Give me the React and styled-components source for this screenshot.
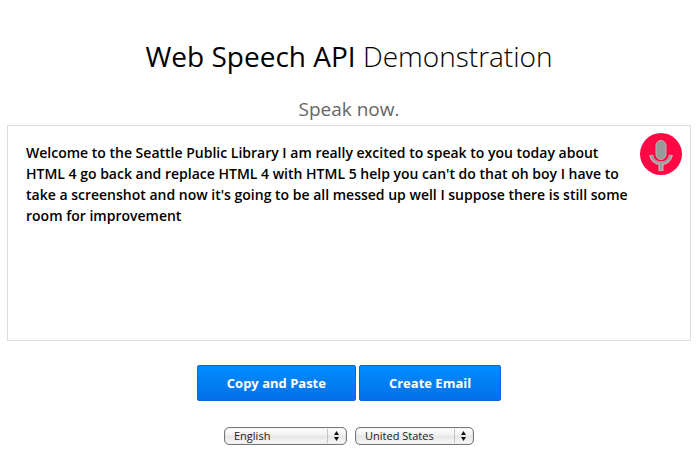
import React from "react";
import styled, { createGlobalStyle } from "styled-components";

const GlobalStyle = createGlobalStyle`
  * { box-sizing: border-box; }
  body {
    margin: 0;
    background: #fff;
    color: #000;
    font-family: "Open Sans", "Noto Sans", sans-serif;
  }
`;

const Page = styled.main`
  display: flex;
  flex-direction: column;
  padding: 36px 9px 8px 7px;
`;

const Title = styled.h1`
  margin: 0;
  font-size: 28px;
  line-height: 40px;
  font-weight: 400;
  text-align: center;
`;

const Light = styled.span`
  font-weight: 300;
`;

const Status = styled.p`
  margin: 18px 0 1px;
  font-size: 19px;
  line-height: 30px;
  color: #666;
  text-align: center;
`;

const Results = styled.section`
  display: flex;
  align-items: flex-start;
  justify-content: space-between;
  gap: 8px;
  min-height: 216px;
  padding: 7px 8px 16px 18px;
  border: 1px solid #ddd;
`;

const Transcript = styled.p`
  margin: 9px 0 0;
  max-width: 604px;
  font-size: 14px;
  line-height: 21px;
  font-weight: 600;
`;

const MicButton = styled.button`
  flex: none;
  width: 42px;
  height: 42px;
  padding: 0;
  border: 0;
  border-radius: 50%;
  background: none;
  cursor: pointer;

  svg { display: block; }
`;

const Actions = styled.div`
  display: flex;
  justify-content: center;
  gap: 3px;
  margin-top: 24px;
`;

const ActionButton = styled.button`
  height: 36px;
  padding: 0 29px;
  border: 1px solid #0a62dc;
  border-radius: 2px;
  background: linear-gradient(#008dfd, #0370ea);
  color: #fff;
  font-family: "Open Sans", sans-serif;
  font-size: 13px;
  font-weight: 700;
  cursor: pointer;
`;

const Languages = styled.div`
  display: flex;
  justify-content: center;
  gap: 8px;
  margin-top: 26px;
`;

const SelectFrame = styled.div`
  position: relative;
  display: flex;
  width: ${(p) => p.$width}px;

  svg {
    position: absolute;
    top: 0;
    right: 0;
    pointer-events: none;
  }
`;

const Select = styled.select`
  width: 100%;
  height: 18px;
  padding: 0 22px 0 9px;
  appearance: none;
  border: 1px solid #777;
  border-radius: 5px;
  background: linear-gradient(#fff, #f0f0f0 45%, #e5e5e5 50%, #f8f8f8);
  box-shadow: inset 0 0 1px #888;
  color: #222;
  font-family: "Open Sans", sans-serif;
  font-size: 11px;
  line-height: 16px;
`;

function MicIcon() {
  return (
    <svg width="42" height="42" viewBox="0 0 42 42" aria-hidden="true">
      <circle cx="21" cy="21" r="21" fill="#ff0844" />
      <g fill="none" stroke="#c5b3b6" strokeLinecap="butt">
        <path d="M11 22 C13 33 29 33 31 22" strokeWidth="4" />
        <path d="M21 30v8" strokeWidth="5" />
      </g>
      <path d="M11.5 22.5C14 32 28 32 30.5 22.5M21 30v7" fill="none" stroke="#999" strokeWidth="2" />
      <rect x="15" y="6" width="12" height="22" rx="6" fill="#ff0844" />
      <rect x="16" y="7.5" width="10" height="19" rx="5" fill="#999" stroke="#bbb0b2" strokeWidth="1" />
    </svg>
  );
}

function Dropdown({ label, value, width }) {
  return (
    <SelectFrame $width={width}>
      <Select aria-label={label} defaultValue={value}>
        <option>{value}</option>
      </Select>
      <svg width="20" height="18" viewBox="0 0 20 18" aria-hidden="true">
        <path d="M.5 2v14" stroke="#c4c4c4" />
        <path d="M7 8l2.5-4L12 8zM7 10h5l-2.5 4z" fill="#111" />
      </svg>
    </SelectFrame>
  );
}

export default function App() {
  return (
    <>
      <GlobalStyle />
      <Page>
        <Title>
          Web Speech API <Light>Demonstration</Light>
        </Title>
        <Status>Speak now.</Status>
        <Results>
          <Transcript>
            Welcome to the Seattle Public Library I am really excited to speak to you today about
            HTML 4 go back and replace HTML 4 with HTML 5 help you can't do that oh boy I have to
            take a screenshot and now it's going to be all messed up well I suppose there is still
            some room for improvement
          </Transcript>
          <MicButton type="button" aria-label="Stop recording">
            <MicIcon />
          </MicButton>
        </Results>
        <Actions>
          <ActionButton type="button">Copy and Paste</ActionButton>
          <ActionButton type="button">Create Email</ActionButton>
        </Actions>
        <Languages>
          <Dropdown label="Language" value="English" width={123} />
          <Dropdown label="Region" value="United States" width={119} />
        </Languages>
      </Page>
    </>
  );
}
